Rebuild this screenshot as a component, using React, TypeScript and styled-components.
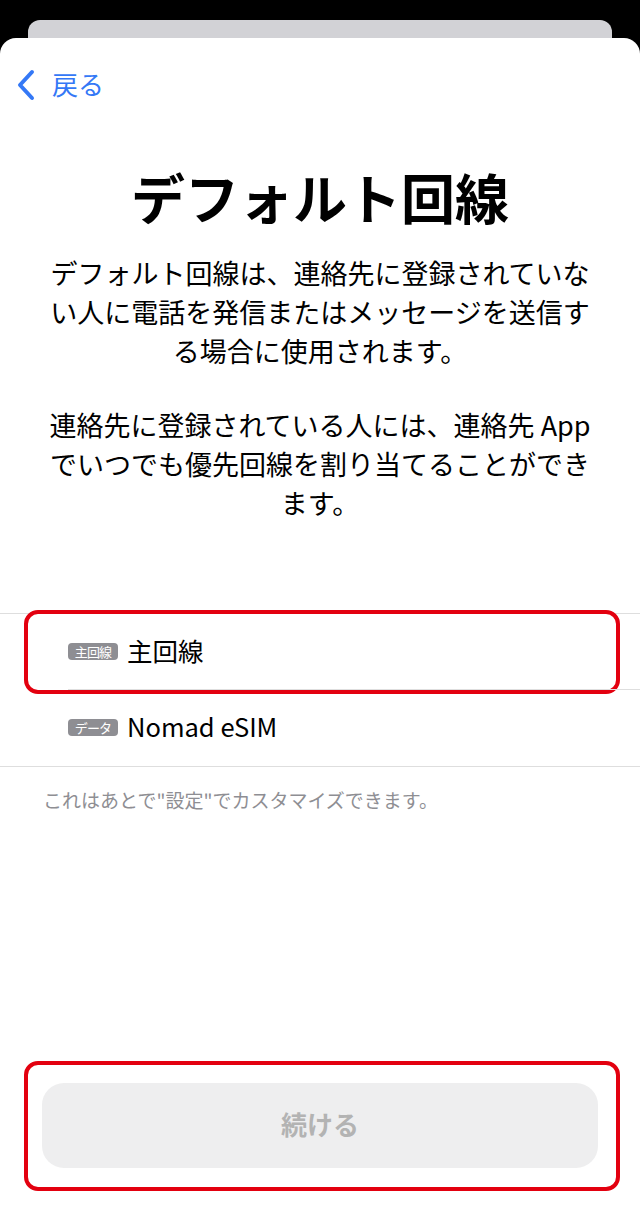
import React from "react";
import styled, { createGlobalStyle } from "styled-components";

const Global = createGlobalStyle`
  html, body { margin: 0; padding: 0; background: #000; }
  body { font-family: "Noto Sans CJK JP", "Noto Sans", sans-serif; }
  * { box-sizing: border-box; }
`;

const Page = styled.div`
  width: 640px;
  height: 1227px;
  background: #000;
  display: flex;
  flex-direction: column;
  overflow: hidden;
`;

const BackCard = styled.div`
  margin: 20px 28px 0;
  height: 18px;
  background: #d2d2d6;
  border-radius: 12px 12px 0 0;
  flex-shrink: 0;
`;

const Sheet = styled.div`
  flex: 1;
  background: #fff;
  border-radius: 16px 16px 0 0;
  display: flex;
  flex-direction: column;
  padding-bottom: 59px;
`;

const NavBar = styled.div`
  height: 94px;
  display: flex;
  align-items: center;
  padding-left: 16px;
  gap: 16px;
  color: #3478f6;
`;

const BackLabel = styled.span`
  font-size: 26px;
  line-height: 1;
  color: #3478f6;
  margin-top: -2px;
`;

const Title = styled.h1`
  margin: 33px 0 0;
  font-size: 54px;
  line-height: 64px;
  font-weight: 700;
  text-align: center;
  color: #000;
  letter-spacing: 0;
`;

const Body = styled.p<{ $gap: number }>`
  margin: ${(p) => p.$gap}px 0 0;
  font-size: 27px;
  line-height: 39px;
  text-align: center;
  color: #000;
  white-space: nowrap;
`;

const List = styled.div`
  margin-top: 91px;
  border-top: 1px solid #dedede;
  border-bottom: 1px solid #dedede;
`;

const Row = styled.div<{ $divider?: boolean }>`
  position: relative;
  height: 76px;
  display: flex;
  align-items: center;
  padding-left: 68px;
  padding-bottom: 5px;
  &::after {
    content: "";
    display: ${(p) => (p.$divider ? "block" : "none")};
    position: absolute;
    left: 68px;
    right: 0;
    bottom: 0;
    height: 1px;
    background: #dedede;
  }
`;

const Badge = styled.span`
  display: inline-flex;
  align-items: center;
  justify-content: center;
  width: 50px;
  height: 17px;
  border-radius: 4px;
  background: #8e8e93;
  color: #fff;
  font-size: 13px;
  line-height: 1;
  margin-right: 9px;
  margin-top: 4px;
  letter-spacing: -0.8px;
  white-space: nowrap;
`;

const RowLabel = styled.span`
  font-size: 25.5px;
  line-height: 1;
  color: #000;
`;

const Highlight = styled.div<{ $t: number; $r: number; $b: number; $l: number }>`
  position: absolute;
  top: ${(p) => p.$t}px;
  right: ${(p) => p.$r}px;
  bottom: ${(p) => p.$b}px;
  left: ${(p) => p.$l}px;
  border: 4px solid #e3000f;
  border-radius: 14px;
  pointer-events: none;
`;

const Note = styled.p`
  margin: 22px 0 0 43px;
  font-size: 19px;
  line-height: 22px;
  color: #8e8e93;
  white-space: nowrap;
`;

const Footer = styled.div`
  margin-top: auto;
  padding: 0 42px;
`;

const ButtonWrap = styled.div`
  position: relative;
`;

const ContinueButton = styled.button`
  width: 100%;
  height: 85px;
  border: none;
  border-radius: 22px;
  background: #eeeeef;
  color: #b3b3b3;
  font-family: "Noto Sans CJK JP", "Noto Sans", sans-serif;
  font-size: 26px;
  font-weight: 700;
  display: flex;
  align-items: center;
  justify-content: center;
  padding: 0 0 4px;
`;

const Chevron = () => (
  <svg width="20" height="32" viewBox="0 0 20 32" fill="none">
    <path
      d="M16 3 L4 16 L16 29"
      stroke="#3478f6"
      strokeWidth="4"
      strokeLinecap="round"
      strokeLinejoin="round"
    />
  </svg>
);

export default function App() {
  return (
    <>
      <Global />
      <Page>
        <BackCard />
        <Sheet>
          <NavBar>
            <Chevron />
            <BackLabel>戻る</BackLabel>
          </NavBar>
          <Title>デフォルト回線</Title>
          <Body $gap={24}>
            デフォルト回線は、連絡先に登録されていな
            <br />
            い人に電話を発信またはメッセージを送信す
            <br />
            る場合に使用されます。
          </Body>
          <Body $gap={35}>
            連絡先に登録されている人には、連絡先 App
            <br />
            でいつでも優先回線を割り当てることができ
            <br />
            ます。
          </Body>
          <List>
            <Row $divider>
              <Badge>主回線</Badge>
              <RowLabel>主回線</RowLabel>
              <Highlight $t={-4} $r={20} $b={-4} $l={24} />
            </Row>
            <Row>
              <Badge>データ</Badge>
              <RowLabel>Nomad eSIM</RowLabel>
            </Row>
          </List>
          <Note>これはあとで"設定"でカスタマイズできます。</Note>
          <Footer>
            <ButtonWrap>
              <ContinueButton>続ける</ContinueButton>
              <Highlight $t={-22} $r={-22} $b={-23} $l={-18} />
            </ButtonWrap>
          </Footer>
        </Sheet>
      </Page>
    </>
  );
}
